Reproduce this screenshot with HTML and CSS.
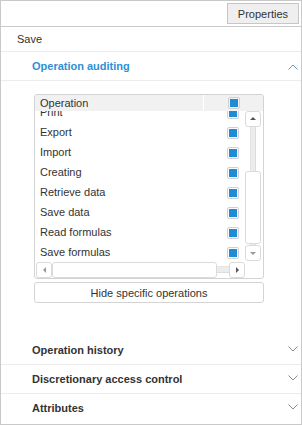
FILE: index.html
```html
<!DOCTYPE html>
<html lang="en">

<head>
    <meta charset="UTF-8">
    <title>Properties</title>
    <link rel="stylesheet" href="styles.css">
</head>

<body>
    <div class="panel">
        <!-- Toolbar -->
        <div class="toolbar">
            <button class="btn-props">Properties</button>
        </div>

        <div class="row-save">Save</div>

        <!-- Operation auditing -->
        <div class="section open">
            <div class="section-head">
                <span>Operation auditing</span>
                <svg class="chevron" width="10" height="6" viewBox="0 0 10 6"><path d="M0.5 5.5 L5 1 L9.5 5.5" /></svg>
            </div>
            <div class="section-body">
                <div class="grid">
                    <div class="grid-head">
                        <div class="col-name">Operation</div>
                        <div class="col-check"><span class="check"></span></div>
                    </div>
                    <div class="grid-main">
                        <div class="grid-view">
                            <div class="grid-rows">
                                <div class="grid-row"><div class="col-name">Print</div><div class="col-check"><span class="check"></span></div></div>
                                <div class="grid-row"><div class="col-name">Export</div><div class="col-check"><span class="check"></span></div></div>
                                <div class="grid-row"><div class="col-name">Import</div><div class="col-check"><span class="check"></span></div></div>
                                <div class="grid-row"><div class="col-name">Creating</div><div class="col-check"><span class="check"></span></div></div>
                                <div class="grid-row"><div class="col-name">Retrieve data</div><div class="col-check"><span class="check"></span></div></div>
                                <div class="grid-row"><div class="col-name">Save data</div><div class="col-check"><span class="check"></span></div></div>
                                <div class="grid-row"><div class="col-name">Read formulas</div><div class="col-check"><span class="check"></span></div></div>
                                <div class="grid-row"><div class="col-name">Save formulas</div><div class="col-check"><span class="check"></span></div></div>
                            </div>
                        </div>
                        <div class="vscroll">
                            <div class="sb-btn"><span class="arr arr-up"></span></div>
                            <div class="vtrack"><div class="vthumb"></div></div>
                            <div class="sb-btn"><span class="arr arr-down"></span></div>
                        </div>
                    </div>
                    <div class="hscroll">
                        <div class="sb-btn"><span class="arr arr-left"></span></div>
                        <div class="hthumb"></div>
                        <div class="htrack"></div>
                        <div class="sb-btn"><span class="arr arr-right"></span></div>
                        <div class="corner"></div>
                    </div>
                </div>
                <button class="btn-hide">Hide specific operations</button>
            </div>
        </div>

        <!-- Collapsed sections -->
        <div class="section">
            <div class="section-head">
                <span>Operation history</span>
                <svg class="chevron" width="10" height="6" viewBox="0 0 10 6"><path d="M0.5 0.5 L5 5 L9.5 0.5" /></svg>
            </div>
        </div>
        <div class="section">
            <div class="section-head">
                <span>Discretionary access control</span>
                <svg class="chevron" width="10" height="6" viewBox="0 0 10 6"><path d="M0.5 0.5 L5 5 L9.5 0.5" /></svg>
            </div>
        </div>
        <div class="section last">
            <div class="section-head">
                <span>Attributes</span>
                <svg class="chevron" width="10" height="6" viewBox="0 0 10 6"><path d="M0.5 0.5 L5 5 L9.5 0.5" /></svg>
            </div>
        </div>
    </div>
</body>

</html>
```

FILE: styles.css
```css
body {
    margin: 0;
    font-family: "Liberation Sans", Arial, sans-serif;
    font-size: 11px;
    color: #333;
    background: #fff;
}

.panel {
    width: 302px;
    height: 425px;
    box-sizing: border-box;
    border: 1px solid #c9c9c9;
    overflow: hidden;
}

.toolbar {
    height: 25px;
    border-bottom: 1px solid #c9c9c9;
    display: flex;
    justify-content: flex-end;
    align-items: flex-start;
}

.btn-props {
    margin: 2px 2px 0 0;
    height: 21px;
    padding: 0 10px;
    background: #efefef;
    border: 1px solid #c6c6c6;
    border-radius: 0;
    font-family: inherit;
    font-size: 11px;
    color: #333;
}

.row-save {
    height: 24px;
    line-height: 24px;
    padding-left: 16px;
    border-bottom: 1px solid #ececec;
}

.section {
    border-bottom: 1px solid #ececec;
}

.section.open {
    border-bottom: none;
}

.section.last {
    border-bottom: none;
}

.section-head {
    height: 28px;
    display: flex;
    align-items: center;
    justify-content: space-between;
    padding: 0 3px 0 31px;
    font-weight: bold;
}

.section.open .section-head {
    color: #2f8fd4;
    border-bottom: 1px solid #ececec;
}

.chevron {
    fill: none;
    stroke: #8a8a8a;
    stroke-width: 1;
    margin-top: -3px;
}

.section.open .chevron {
    stroke: #5a9fcf;
    margin-top: 1px;
}

.section-body {
    height: 255px;
    padding: 13px 0 0 33px;
    box-sizing: border-box;
}

/* Grid */
.grid {
    width: 230px;
    box-sizing: border-box;
    border: 1px solid #d3d3d3;
    border-radius: 3px;
    overflow: hidden;
}

.grid-head {
    height: 16px;
    display: flex;
    background: #f1f1f1;
}

.col-name {
    width: 168px;
    flex: none;
    padding-left: 5px;
    box-sizing: border-box;
    white-space: nowrap;
}

.grid-head .col-name {
    line-height: 16px;
    border-right: 1px solid #fff;
    width: 169px;
}

.col-check {
    width: 59px;
    flex: none;
    display: flex;
    justify-content: center;
    align-items: center;
}

.check {
    width: 8px;
    height: 8px;
    border: 1px solid #d0d0d0;
    border-radius: 2px;
    padding: 1px;
    background: #1e8bd4;
    background-clip: content-box;
    margin-left: 1px;
}

.grid-main {
    height: 151px;
    display: flex;
}

.grid-view {
    width: 210px;
    overflow: hidden;
}

.grid-rows {
    width: 228px;
    margin-top: -9px;
}

.grid-row {
    height: 20px;
    display: flex;
    align-items: center;
}

.grid-row .col-check {
    padding-top: 2px;
}

/* Scrollbars */
.sb-btn {
    width: 14px;
    height: 14px;
    border: 1px solid #dadada;
    border-radius: 3px;
    background: #fff;
    display: flex;
    align-items: center;
    justify-content: center;
    flex: none;
}

.arr {
    width: 0;
    height: 0;
    border: 3px solid transparent;
}

.arr-up {
    border-bottom-color: #555;
    border-top-width: 0;
    margin-top: -1px;
}

.arr-down {
    border-top-color: #999;
    border-bottom-width: 0;
}

.arr-left {
    border-right-color: #999;
    border-left-width: 0;
}

.arr-right {
    border-left-color: #555;
    border-right-width: 0;
}

.vscroll {
    width: 18px;
    display: flex;
    flex-direction: column;
    padding-bottom: 1px;
    box-sizing: border-box;
}

.vtrack {
    flex: 1;
    width: 16px;
    display: flex;
    flex-direction: column;
    justify-content: flex-end;
    background: linear-gradient(to right, transparent 5px, #dcdcdc 5px, #ececec 6px, #ececec 10px, #dcdcdc 10px, #dcdcdc 11px, transparent 11px);
    padding-bottom: 1px;
}

.vthumb {
    height: 71px;
    width: 14px;
    border: 1px solid #dadada;
    border-radius: 3px;
    background: #fff;
}

.hscroll {
    height: 16px;
    display: flex;
    padding-left: 1px;
}

.hthumb {
    width: 163px;
    height: 14px;
    border: 1px solid #dadada;
    border-radius: 3px;
    background: #fff;
    flex: none;
}

.htrack {
    width: 12px;
    background: linear-gradient(to bottom, transparent 4px, #dcdcdc 4px, #ececec 5px, #ececec 10px, #dcdcdc 10px, #dcdcdc 11px, transparent 11px);
}

.corner {
    flex: 1;
}

.btn-hide {
    display: block;
    margin-top: 3px;
    width: 230px;
    height: 21px;
    background: #fff;
    border: 1px solid #d3d3d3;
    border-radius: 3px;
    font-family: inherit;
    font-size: 11px;
    color: #333;
    padding: 0;
}
```
